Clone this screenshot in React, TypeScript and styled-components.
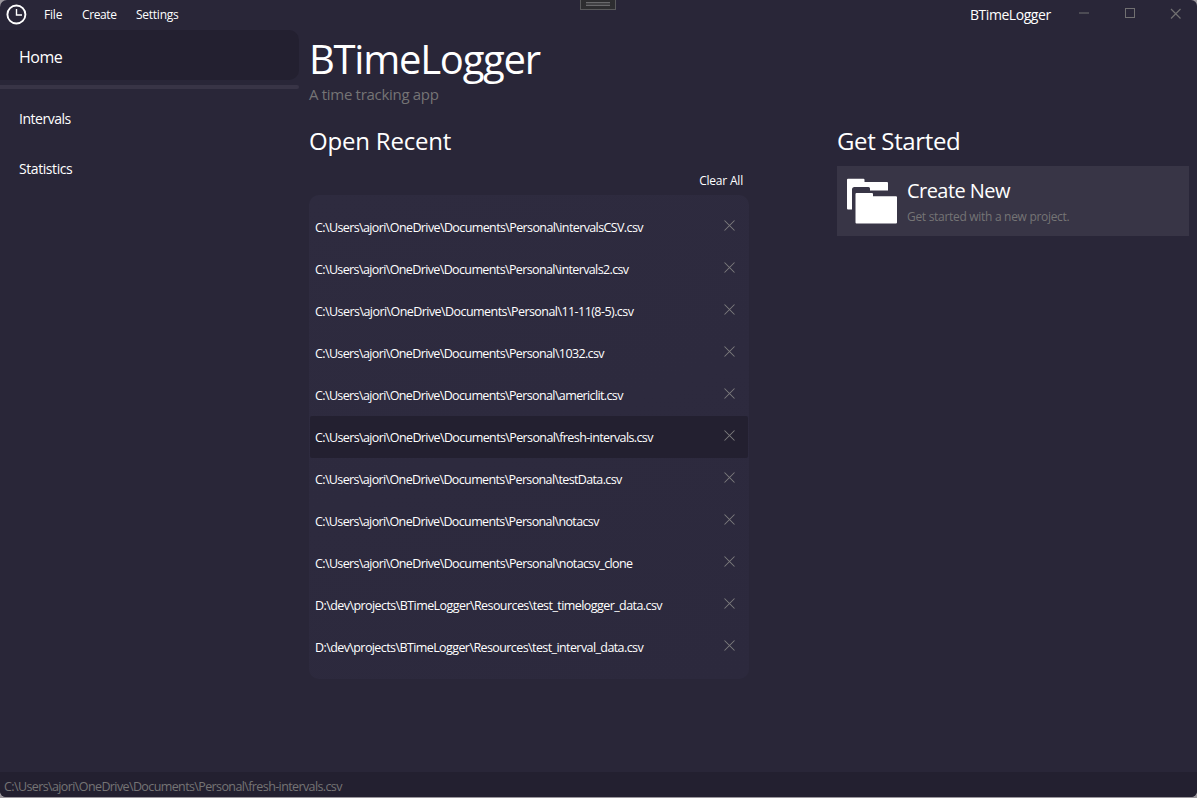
import React from "react";
import styled, { createGlobalStyle } from "styled-components";

const GlobalStyle = createGlobalStyle`
  * { box-sizing: border-box; }
  body {
    margin: 0;
    background: #9b979d;
    font-family: "Open Sans", "Noto Sans", sans-serif;
    color: #fff;
    overflow: hidden;
  }
`;

const Window = styled.div`
  position: relative;
  display: flex;
  flex-direction: column;
  width: 1197px;
  height: 797px;
  background: #292638;
  border-radius: 7px 6px 6px 6px;
  overflow: hidden;
`;

const TitleBar = styled.header`
  display: flex;
  align-items: center;
  height: 30px;
  padding-left: 6px;
  flex: none;
`;

const Logo = styled.svg`
  width: 21px;
  height: 21px;
  margin: -2px 17px 0 0;
`;

const Label = styled.span<{ $size: number; $spacing?: number; $color?: string; $line?: number }>`
  display: block;
  font-size: ${(p) => p.$size}px;
  letter-spacing: ${(p) => p.$spacing ?? 0}px;
  line-height: ${(p) => (p.$line ? `${p.$line}px` : "1.36")};
  color: ${(p) => p.$color ?? "#fff"};
  white-space: pre;
`;

const Menu = styled.nav`
  display: flex;
  flex: 1;
`;

const MenuItem = styled.div<{ $width: number }>`
  width: ${(p) => p.$width}px;
`;

const AppName = styled.div`
  width: 109px;
`;

const WindowButtons = styled.svg`
  width: 118px;
  height: 30px;
`;

const DebugTab = styled.div`
  position: absolute;
  left: 580px;
  top: 0;
  width: 36px;
  height: 10px;
  padding: 2px 5px 0;
  background: #2d2d30;
  border: 1px solid #59595c;
  border-top: 0;
`;

const Grip = styled.div`
  height: 4px;
  border-top: 1px solid #69696c;
  border-bottom: 1px solid #69696c;
  background: #414144;
`;

const Body = styled.div`
  display: flex;
  flex: 1;
`;

const Sidebar = styled.aside`
  width: 299px;
  flex: none;
`;

const ActiveNav = styled.div`
  display: flex;
  align-items: center;
  height: 50px;
  padding: 5px 0 0 19px;
  background: #232030;
  border-radius: 0 10px 10px 0;
`;

const Divider = styled.div`
  height: 4px;
  margin: 5px 0 5px;
  background: #383446;
  border-radius: 0 2px 2px 0;
`;

const NavItem = styled.div`
  display: flex;
  align-items: center;
  height: 50px;
  padding: 0 0 0 19px;
`;

const Main = styled.main`
  display: flex;
  flex-direction: column;
  flex: 1;
  padding: 1px 8px 0 10px;
`;

const Columns = styled.div`
  display: flex;
  justify-content: space-between;
  margin-top: 21px;
`;

const Recent = styled.section`
  width: 440px;
`;

const ClearRow = styled.div`
  display: flex;
  justify-content: flex-end;
  height: 35px;
  padding: 13px 6px 0 0;
`;

const RecentList = styled.div`
  height: 484px;
  padding: 11px 1px 0;
  background: linear-gradient(160deg, #2e2b3f 0%, #2d2a3e 50%, #2c293d 100%);
  border-radius: 10px;
`;

const RecentRow = styled.div<{ $active: boolean }>`
  display: flex;
  align-items: center;
  justify-content: space-between;
  height: 42px;
  padding: 0 13px 0 5px;
  background: ${(p) => (p.$active ? "#232030" : "transparent")};
  border-radius: 2px;
`;

const RemoveIcon = styled.svg`
  width: 11px;
  height: 11px;
  margin-top: -3px;
`;

const Started = styled.section`
  width: 352px;
`;

const Card = styled.div`
  display: flex;
  height: 70px;
  margin-top: 6px;
  background: #383546;
`;

const FolderIcon = styled.svg`
  width: 52px;
  height: 48px;
  margin: 11px 9px 0 9px;
`;

const CardText = styled.div`
  padding-top: 11px;
`;

const StatusBar = styled.footer`
  display: flex;
  align-items: center;
  height: 25px;
  padding: 3px 4px 0;
  background: #232030;
  flex: none;
`;

const files: { path: string; spacing: number }[] = [
  { path: "C:\\Users\\ajori\\OneDrive\\Documents\\Personal\\intervalsCSV.csv", spacing: -0.61 },
  { path: "C:\\Users\\ajori\\OneDrive\\Documents\\Personal\\intervals2.csv", spacing: -0.62 },
  { path: "C:\\Users\\ajori\\OneDrive\\Documents\\Personal\\11-11(8-5).csv", spacing: -0.56 },
  { path: "C:\\Users\\ajori\\OneDrive\\Documents\\Personal\\1032.csv", spacing: -0.62 },
  { path: "C:\\Users\\ajori\\OneDrive\\Documents\\Personal\\americlit.csv", spacing: -0.62 },
  { path: "C:\\Users\\ajori\\OneDrive\\Documents\\Personal\\fresh-intervals.csv", spacing: -0.61 },
  { path: "C:\\Users\\ajori\\OneDrive\\Documents\\Personal\\testData.csv", spacing: -0.63 },
  { path: "C:\\Users\\ajori\\OneDrive\\Documents\\Personal\\notacsv", spacing: -0.63 },
  { path: "C:\\Users\\ajori\\OneDrive\\Documents\\Personal\\notacsv_clone", spacing: -0.62 },
  { path: "D:\\dev\\projects\\BTimeLogger\\Resources\\test_timelogger_data.csv", spacing: -0.57 },
  { path: "D:\\dev\\projects\\BTimeLogger\\Resources\\test_interval_data.csv", spacing: -0.59 },
];

const ACTIVE = 5;

export default function App() {
  return (
    <>
      <GlobalStyle />
      <Window>
        <TitleBar>
          <Logo viewBox="0 0 21 21" fill="none" stroke="#fff">
            <circle cx="10.4" cy="10.5" r="9" strokeWidth="1.9" />
            <path d="M10.5 5v6h5.5" strokeWidth="1.4" />
          </Logo>
          <Menu>
            <MenuItem $width={38}><Label $size={12} $spacing={-0.2}>File</Label></MenuItem>
            <MenuItem $width={54}><Label $size={12} $spacing={-0.4}>Create</Label></MenuItem>
            <MenuItem $width={60}><Label $size={12} $spacing={-0.25}>Settings</Label></MenuItem>
          </Menu>
          <AppName><Label $size={14} $spacing={-0.45}>BTimeLogger</Label></AppName>
          <WindowButtons viewBox="0 0 118 30" fill="none" stroke="#717071">
            <path d="M0 13h10" />
            <rect x="46.5" y="8.5" width="9" height="9" />
            <path d="M92 9l9.500 9.500M101.500 9L92 18.500" strokeWidth="1.2" />
          </WindowButtons>
        </TitleBar>
        <DebugTab><Grip /></DebugTab>
        <Body>
          <Sidebar>
            <ActiveNav><Label $size={16} $spacing={-0.5}>Home</Label></ActiveNav>
            <Divider />
            <NavItem><Label $size={14} $spacing={-0.48}>Intervals</Label></NavItem>
            <NavItem><Label $size={14} $spacing={-0.42}>Statistics</Label></NavItem>
          </Sidebar>
          <Main>
            <Label $size={40} $spacing={-1.25} $line={56}>BTimeLogger</Label>
            <Label $size={15} $spacing={-0.3} $line={14} $color="#757475">A time tracking app</Label>
            <Columns>
              <Recent>
                <Label $size={24} $spacing={-0.2} $line={38}>Open Recent</Label>
                <ClearRow><Label $size={12} $spacing={-0.2}>Clear All</Label></ClearRow>
                <RecentList>
                  {files.map((f, i) => (
                    <RecentRow key={f.path} $active={i === ACTIVE}>
                      <Label $size={12.5} $spacing={f.spacing}>{f.path}</Label>
                      <RemoveIcon viewBox="0 0 11 11" stroke="#7c7b7d" strokeWidth="1.05" fill="none">
                        <path d="M.5 .5l10 10M10.500 .5l-10 10" />
                      </RemoveIcon>
                    </RecentRow>
                  ))}
                </RecentList>
              </Recent>
              <Started>
                <Label $size={24} $spacing={-0.35} $line={38}>Get Started</Label>
                <Card>
                  <FolderIcon viewBox="0 0 52 48" fill="#fff">
                    <path d="M2 1.700h15.500q1 0 1 1v2.300h22.500q1 0 1 1v7.500h-18v-2q0-1.500-1.500-1.500h-14q-2.500 0-2.500 2.500v20h-4q-1 0-1-1v-28.800q0-1 1-1z" />
                    <path d="M10.500 16h15.500q1 0 1 1v2.300h23q1 0 1 1v25.200q0 1-1 1h-39.500q-1 0-1-1v-28.500q0-1 1-1z" />
                  </FolderIcon>
                  <CardText>
                    <Label $size={20} $spacing={-0.55} $line={28}>Create New</Label>
                    <Label $size={12} $spacing={-0.3} $line={24} $color="#757475">Get started with a new project.</Label>
                  </CardText>
                </Card>
              </Started>
            </Columns>
          </Main>
        </Body>
        <StatusBar>
          <Label $size={12.5} $spacing={-0.61} $color="#757475">{files[ACTIVE].path}</Label>
        </StatusBar>
      </Window>
    </>
  );
}
